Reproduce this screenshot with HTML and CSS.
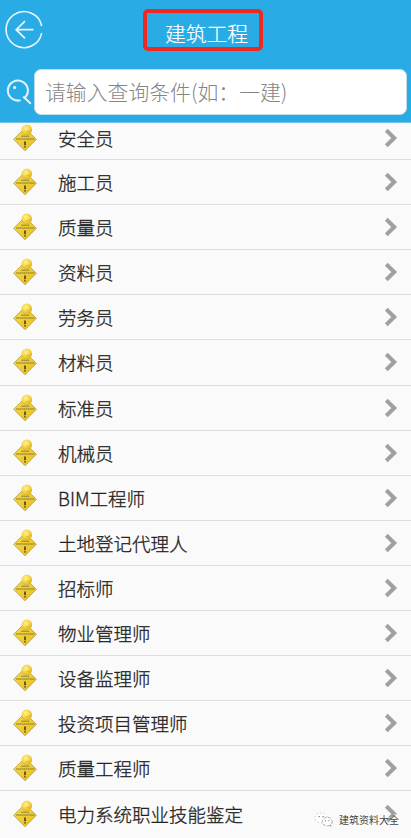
FILE: index.html
```html
<!DOCTYPE html>
<html lang="zh-CN">
<head>
<meta charset="utf-8">
<title>建筑工程</title>
<link rel="stylesheet" href="styles.css">
</head>
<body>
<svg class="defs" aria-hidden="true">
  <defs>
    <linearGradient id="gold" x1="0" y1="0" x2="1" y2="1">
      <stop offset="0" stop-color="#f8dc45"/>
      <stop offset="1" stop-color="#e6bd24"/>
    </linearGradient>
    <radialGradient id="ball" cx=".4" cy=".35" r=".65">
      <stop offset="0" stop-color="#fff096"/>
      <stop offset=".6" stop-color="#f3d442"/>
      <stop offset="1" stop-color="#deb42a"/>
    </radialGradient>
    <symbol id="sign" viewBox="0 0 24 28">
      <path d="M12 4 23.4 15.3 12 26.8.6 15.3Z" fill="url(#gold)" stroke="#a99145" stroke-width=".7" stroke-linejoin="round"/>
      <path d="M8.2 12.2h8" stroke="#84823b" stroke-width="1"/>
      <path d="M3 15h18.4" stroke="#7f7630" stroke-width="1.2" stroke-dasharray="1.6 .3"/>
      <path d="M12 17.6v3.6M12 22.2v1.3" stroke="#39341b" stroke-width="1.5"/>
      <path d="M8.2 9.6 11 6l4.5 3.5-3.5 1.6Z" fill="#e3bf3b"/>
      <circle cx="13.8" cy="5.8" r="5.3" fill="url(#ball)"/>
      <path d="M13.5 7.6q2.4.6 4.2-1.7" fill="none" stroke="#d4a92a" stroke-width=".7"/>
    </symbol>
    <symbol id="chevron" viewBox="0 0 14 20">
      <path d="M2.3 2.3 10.2 10 2.3 17.7" fill="none" stroke="#a0a0a0" stroke-width="4"/>
    </symbol>
  </defs>
</svg>
<header class="header">
  <div class="bar">
    <svg class="back" viewBox="0 0 40 40">
      <path d="M37.7 16A18 18 0 1 0 37.7 23.2" fill="none" stroke="#e6f8ff" stroke-width="1.6"/>
      <path d="M29.5 19.7H12.2M21 11.1l-8.8 8.6 8.8 8.6" fill="none" stroke="#e6f8ff" stroke-width="1.7"/>
    </svg>
    <h1 class="title">建筑工程</h1>
  </div>
  <div class="search">
    <svg class="glass" viewBox="0 0 26 26">
      <path d="M14.6 21.2A10 10 0 1 1 18.7 18.9L24.8 24.8M18.7 18.9L17.2 17.4" fill="none" stroke="#def4fd" stroke-width="2.1"/>
      <circle cx="8.6" cy="8.5" r="1.6" fill="#def4fd"/>
    </svg>
    <div class="field">请输入查询条件(如：一建)</div>
  </div>
</header>
<main class="list">
  <div class="row first"><svg class="sign"><use href="#sign"/></svg><span class="name">安全员</span><svg class="chevron"><use href="#chevron"/></svg></div>
  <div class="row"><svg class="sign"><use href="#sign"/></svg><span class="name">施工员</span><svg class="chevron"><use href="#chevron"/></svg></div>
  <div class="row"><svg class="sign"><use href="#sign"/></svg><span class="name">质量员</span><svg class="chevron"><use href="#chevron"/></svg></div>
  <div class="row"><svg class="sign"><use href="#sign"/></svg><span class="name">资料员</span><svg class="chevron"><use href="#chevron"/></svg></div>
  <div class="row"><svg class="sign"><use href="#sign"/></svg><span class="name">劳务员</span><svg class="chevron"><use href="#chevron"/></svg></div>
  <div class="row"><svg class="sign"><use href="#sign"/></svg><span class="name">材料员</span><svg class="chevron"><use href="#chevron"/></svg></div>
  <div class="row"><svg class="sign"><use href="#sign"/></svg><span class="name">标准员</span><svg class="chevron"><use href="#chevron"/></svg></div>
  <div class="row"><svg class="sign"><use href="#sign"/></svg><span class="name">机械员</span><svg class="chevron"><use href="#chevron"/></svg></div>
  <div class="row"><svg class="sign"><use href="#sign"/></svg><span class="name">BIM工程师</span><svg class="chevron"><use href="#chevron"/></svg></div>
  <div class="row"><svg class="sign"><use href="#sign"/></svg><span class="name">土地登记代理人</span><svg class="chevron"><use href="#chevron"/></svg></div>
  <div class="row"><svg class="sign"><use href="#sign"/></svg><span class="name">招标师</span><svg class="chevron"><use href="#chevron"/></svg></div>
  <div class="row"><svg class="sign"><use href="#sign"/></svg><span class="name">物业管理师</span><svg class="chevron"><use href="#chevron"/></svg></div>
  <div class="row"><svg class="sign"><use href="#sign"/></svg><span class="name">设备监理师</span><svg class="chevron"><use href="#chevron"/></svg></div>
  <div class="row"><svg class="sign"><use href="#sign"/></svg><span class="name">投资项目管理师</span><svg class="chevron"><use href="#chevron"/></svg></div>
  <div class="row"><svg class="sign"><use href="#sign"/></svg><span class="name">质量工程师</span><svg class="chevron"><use href="#chevron"/></svg></div>
  <div class="row"><svg class="sign"><use href="#sign"/></svg><span class="name">电力系统职业技能鉴定</span><svg class="chevron"><use href="#chevron"/></svg></div>
</main>
<div class="watermark">
  <svg class="wechat" viewBox="0 0 20 16">
    <ellipse cx="7" cy="6" rx="6" ry="5" fill="#fff" stroke="#aaa" stroke-width=".6" stroke-dasharray="1.5 2"/>
    <ellipse cx="13.2" cy="9.6" rx="5" ry="4.3" fill="#fff" stroke="#888" stroke-width=".7" stroke-dasharray="3 1.4"/>
    <path d="M4.6 4.6h1.2M8.6 4.6h1.2M11 8.7h1M14.5 8.7h1M16 13.2l1.3 1.2" stroke="#666" stroke-width="1"/>
  </svg>
  <span>建筑资料大全</span>
</div>
</body>
</html>
```

FILE: styles.css
```css
* { box-sizing: border-box; }

body {
  margin: 0;
  height: 838px;
  overflow: hidden;
  position: relative;
  background: #fafafa;
  font-family: "Noto Sans CJK SC", sans-serif;
}

.defs { position: absolute; width: 0; height: 0; }

.header {
  height: 123px;
  background: #29abe5;
  border-bottom: 1px solid #74c5e9;
}

.bar {
  height: 69px;
  display: flex;
  align-items: flex-start;
  padding: 9px 0 0 4px;
}

.back { width: 40px; height: 40px; margin-top: 1px; flex: none; }

.title {
  margin: 0 0 0 99px;
  width: 120px;
  height: 42px;
  border: 4px solid #ed2921;
  border-radius: 5px;
  padding-left: 7px;
  color: #fff;
  font-size: 20.8px;
  font-weight: 300;
  line-height: 40px;
  text-align: center;
  -webkit-text-stroke: .2px #fff;
}

.search { display: flex; padding: 0 4px 0 6px; }

.glass { width: 26px; height: 26px; margin: 10px 2px 0 0; flex: none; }

.field {
  flex: 1;
  height: 46px;
  border-radius: 7px;
  border: 1px solid #bedce6;
  background: #fff;
  padding-left: 10px;
  color: #858585;
  font-size: 20.85px;
  font-weight: 300;
  line-height: 43px;
  white-space: nowrap;
}

.row {
  height: 45.07px;
  display: flex;
  align-items: center;
  padding: 0 13px;
  border-bottom: 1px solid #dedede;
}

.row.first { height: 37.2px; padding-bottom: 6.5px; }

.row:last-child { border-bottom: 0; }

.sign { width: 24px; height: 28px; flex: none; }

.name {
  flex: 1;
  margin-left: 21px;
  color: #222;
  font-size: 18.5px;
  line-height: 28px;
  font-weight: 300;
  -webkit-text-stroke: .3px #222;
  white-space: nowrap;
}

.chevron { width: 14px; height: 20px; flex: none; }

.watermark {
  position: absolute;
  left: 314px;
  top: 811px;
  display: flex;
  align-items: center;
  color: #444;
  font-size: 10px;
  line-height: 18px;
  white-space: nowrap;
}

.watermark span { text-shadow: 1px -1px 0 #fff; }

.wechat { width: 20px; height: 16px; margin-right: 5px; }
```
